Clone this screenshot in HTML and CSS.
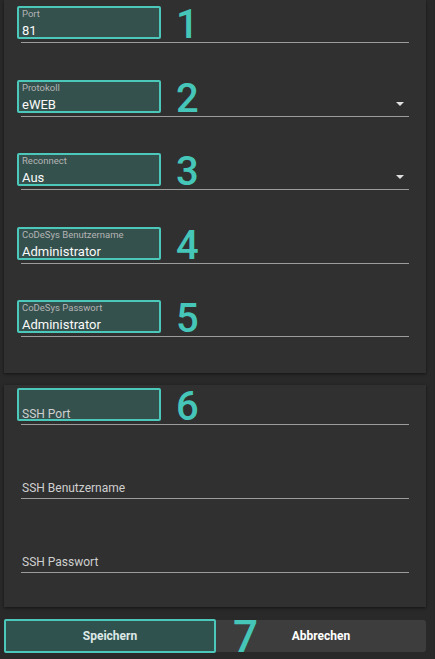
FILE: index.html
```html
<!DOCTYPE html>
<html lang="de">
<head>
<meta charset="utf-8">
<title>Einstellungen</title>
<link rel="stylesheet" href="styles.css">
</head>
<body>
<div class="page">
  <section class="card card-main">
    <div class="field">
      <div class="hl"></div>
      <span class="label">Port</span>
      <div class="value-row"><span class="value">81</span></div>
      <span class="num">1</span>
    </div>
    <div class="field">
      <div class="hl"></div>
      <span class="label">Protokoll</span>
      <div class="value-row"><span class="value">eWEB</span><span class="arrow"></span></div>
      <span class="num">2</span>
    </div>
    <div class="field">
      <div class="hl"></div>
      <span class="label">Reconnect</span>
      <div class="value-row"><span class="value">Aus</span><span class="arrow"></span></div>
      <span class="num">3</span>
    </div>
    <div class="field">
      <div class="hl"></div>
      <span class="label">CoDeSys Benutzername</span>
      <div class="value-row"><span class="value">Administrator</span></div>
      <span class="num">4</span>
    </div>
    <div class="field">
      <div class="hl"></div>
      <span class="label">CoDeSys Passwort</span>
      <div class="value-row"><span class="value">Administrator</span></div>
      <span class="num">5</span>
    </div>
  </section>

  <section class="card card-ssh">
    <div class="field empty">
      <div class="hl"></div>
      <span class="placeholder">SSH Port</span>
      <span class="num">6</span>
    </div>
    <div class="field empty">
      <span class="placeholder">SSH Benutzername</span>
    </div>
    <div class="field empty">
      <span class="placeholder">SSH Passwort</span>
    </div>
  </section>

  <div class="actions">
    <button class="btn btn-save">Speichern</button>
    <div class="btn btn-cancel">Abbrechen<span class="num num7">7</span></div>
  </div>
</div>
</body>
</html>
```

FILE: styles.css
```css
* { box-sizing: border-box; }

html, body {
  margin: 0;
  padding: 0;
  background: #292929;
  font-family: Roboto, "Noto Sans", Arial, sans-serif;
  color: #fff;
}

.page {
  width: 435px;
  height: 659px;
  padding: 0 8px 0 4px;
  display: flex;
  flex-direction: column;
  border-right: 1px solid #262626;
}

.card {
  background: #303030;
  box-shadow: 0 1px 3px rgba(0, 0, 0, 0.55);
  padding-left: 17px;
  padding-right: 17px;
  display: flex;
  flex-direction: column;
}

.card-main {
  height: 373px;
  padding-top: 6px;
}

.card-ssh {
  margin-top: 12px;
  height: 222px;
  padding-top: 3px;
}

.field {
  position: relative;
  height: 37px;
  border-bottom: 1px solid #9c9c9c;
  padding-top: 2px;
  padding-left: 1px;
  display: flex;
  flex-direction: column;
  flex-shrink: 0;
}

.card-main .field + .field { margin-top: 36.5px; }
.card-ssh .field + .field { margin-top: 37px; }

.hl {
  position: absolute;
  left: -4px;
  top: 0;
  width: 144px;
  height: 33px;
  border: 2px solid #4cc8bb;
  border-radius: 2px;
  background: rgba(72, 200, 185, 0.22);
}

.label {
  position: relative;
  font-size: 9.5px;
  line-height: 12px;
  color: #b4b4b4;
}

.value-row {
  position: relative;
  margin-top: 3px;
  display: flex;
  justify-content: space-between;
  align-items: center;
}

.value {
  font-size: 13px;
  line-height: 16px;
  color: #fafafa;
}

.arrow {
  width: 0;
  height: 0;
  border-left: 4px solid transparent;
  border-right: 4px solid transparent;
  border-top: 4px solid #e0e0e0;
  margin-right: 5px;
  margin-top: -2px;
}

.field.empty {
  justify-content: flex-end;
  padding-bottom: 3px;
}

.placeholder {
  position: relative;
  font-size: 12px;
  line-height: 14px;
  color: #cfcfcf;
}

.num {
  position: absolute;
  left: 155px;
  top: -1px;
  font-size: 40px;
  line-height: 40px;
  color: #45c6b8;
  font-weight: 500;
}

.actions {
  margin-top: 12px;
  display: flex;
  align-items: center;
  width: 422px;
}

.btn {
  font-family: Roboto, "Noto Sans", Arial, sans-serif;
  font-size: 12px;
  font-weight: 700;
  border: none;
  padding: 0;
  display: flex;
  align-items: center;
  justify-content: center;
}

.btn-save {
  width: 212px;
  height: 34px;
  border: 2px solid #4cc8bb;
  border-radius: 2px;
  background: #30524e;
  color: #dde9e7;
}

.btn-cancel {
  position: relative;
  flex: 1;
  height: 32px;
  background: #3d3d3d;
  border-radius: 0 3px 3px 0;
  color: #ffffff;
  overflow: visible;
}

.num7 {
  left: 17px;
  top: -1px;
  font-size: 44px;
  line-height: 36px;
}
```
